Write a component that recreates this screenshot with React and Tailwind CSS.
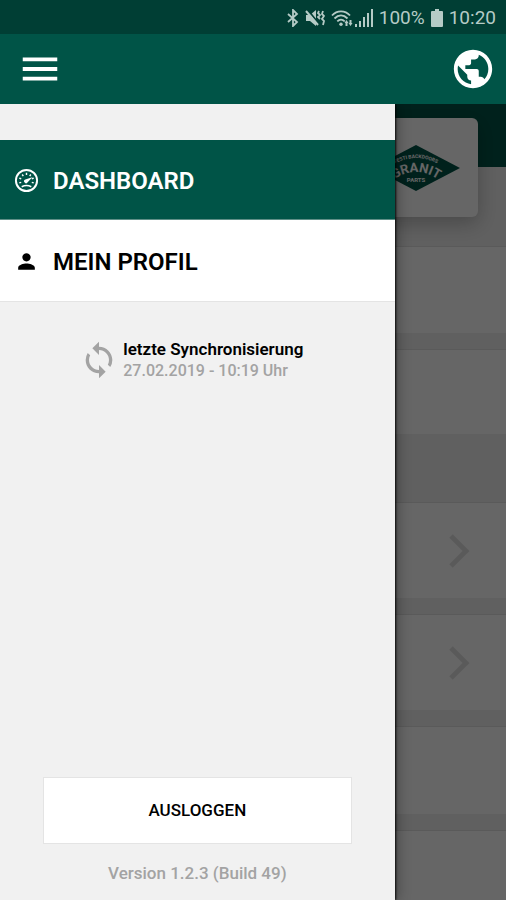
import React from 'react';
import { MdPublic, MdSync, MdPerson, MdMenu } from 'react-icons/md';

function GaugeIcon({ className }) {
  return (
    <svg viewBox="0 0 26 26" className={className} fill="none" stroke="currentColor" aria-hidden="true">
      <circle cx="13" cy="13" r="11" strokeWidth="2" />
      <path
        d="M5.500 15.500l2-.6M5.500 10.500l2 .7M8.500 6.800l1.200 1.600M13 5v2.200M17.500 6.800l-1.200 1.600M20.500 10.500l-2 .7M20.500 15.500l-2-.6"
        strokeWidth="1.500"
      />
      <path d="M8 19.500q5-2.600 10 0" strokeWidth="1.500" />
      <path d="M19 9.500l-5 5.600a2 2 0 1 1-2.200-3.200z" fill="currentColor" stroke="none" />
    </svg>
  );
}

const menuItems = [
  { label: 'DASHBOARD', icon: GaugeIcon, active: true },
  { label: 'MEIN PROFIL', icon: MdPerson, active: false },
];

function BluetoothIcon() {
  return (
    <svg viewBox="0 0 12 18" className="h-[18px] w-3" fill="none" stroke="currentColor" strokeWidth="1.8" aria-hidden="true">
      <path d="M1 5l9 8-4 4V1l4 4-9 8" />
    </svg>
  );
}

function MutedIcon() {
  return (
    <svg viewBox="0 0 20 18" className="h-[18px] w-5" fill="none" stroke="currentColor" aria-hidden="true">
      <path d="M1 6h4l6-5v16l-6-5H1z" fill="currentColor" stroke="none" />
      <path d="M2 0l12 15" stroke="#003e34" strokeWidth="2" />
      <path d="M1 2l12 14" strokeWidth="2" />
      <path d="M14 2l-1 2 2 2-2 2 2 2M18 2l-1 3 2 2-2 3 2 2-1 4" strokeWidth="1.8" />
    </svg>
  );
}

function WifiIcon() {
  return (
    <svg viewBox="0 0 22 18" className="h-[18px] w-[22px]" fill="none" stroke="currentColor" aria-hidden="true">
      <path d="M1 6.500C6 1 14 1 19 6.500" strokeWidth="1.800" />
      <path d="M3.500 9.500C7.500 5.500 12.500 5.500 16.500 9.500" strokeWidth="1.800" />
      <path d="M6.300 12.300c2.200-2.200 5.200-2.200 7.400 0" strokeWidth="1.800" />
      <circle cx="10" cy="15.300" r="1.700" fill="currentColor" stroke="none" />
      <path d="M15.500 11l2 3h-1v3h-2v-3h-1zM19.500 17l-2-3h1v-3h2v3h1z" fill="currentColor" stroke="none" />
    </svg>
  );
}

function SignalIcon() {
  return (
    <svg viewBox="0 0 18 18" className="size-[18px]" fill="currentColor" aria-hidden="true">
      <path d="M0 15h2v3H0zM4 12h2v6H4zM8 8h2v10H8zM12 4h2v14h-2zM16 0h2v18h-2z" />
    </svg>
  );
}

function BatteryIcon() {
  return (
    <svg viewBox="0 0 12 18" className="h-[18px] w-3" fill="currentColor" aria-hidden="true">
      <path d="M4 0h4v2h3a1 1 0 0 1 1 1v14a1 1 0 0 1-1 1H1a1 1 0 0 1-1-1V3a1 1 0 0 1 1-1h3z" />
    </svg>
  );
}

function StatusBar() {
  return (
    <div className="flex h-[34px] shrink-0 items-center justify-end gap-[6px] bg-[#003e34] pt-[2px] pr-[10px] text-[19px] text-[#b5cbc6]">
      <BluetoothIcon />
      <MutedIcon />
      <div className="flex items-center gap-[2px]">
        <WifiIcon />
        <SignalIcon />
      </div>
      <span>100%</span>
      <BatteryIcon />
      <span>10:20</span>
    </div>
  );
}

function Header() {
  return (
    <header className="flex h-[70px] shrink-0 items-center justify-between bg-[#005447] pr-[10px] pl-[17px] text-white">
      <button type="button" aria-label="Menü">
        <MdMenu className="size-[46px]" />
      </button>
      <button type="button" aria-label="Sprache">
        <MdPublic className="size-[46px]" />
      </button>
    </header>
  );
}

function Logo() {
  return (
    <svg viewBox="0 0 88 46" className="h-[46px] w-[88px]" role="img" aria-label="Granit Parts">
      <defs>
        <path id="logo-top" d="M14 24Q44 2 74 24" />
        <path id="logo-name" d="M17 38Q44 16 71 38" />
      </defs>
      <path d="M44 0L88 23L44 46L0 23Z" fill="#005447" />
      <g fill="#fff" fontFamily="Roboto, sans-serif" fontWeight="700" textAnchor="middle">
        <text fontSize="5">
          <textPath href="#logo-top" startOffset="50%">FESTI BACKDOORS</textPath>
        </text>
        <text fontSize="13">
          <textPath href="#logo-name" startOffset="50%">GRANIT</textPath>
        </text>
        <text x="44" y="37" fontSize="6">PARTS</text>
      </g>
    </svg>
  );
}

function Row({ arrow, className }) {
  return (
    <div className={`flex shrink-0 items-center justify-end border-t border-[#e2e2e2] bg-white pr-9 ${className}`}>
      {arrow && (
        <svg viewBox="0 0 21 34" className="h-[34px] w-[21px]" fill="none" stroke="#e2e2e2" strokeWidth="5" aria-hidden="true">
          <path d="M2 2l15 15L2 32" />
        </svg>
      )}
    </div>
  );
}

function Dashboard() {
  return (
    <div className="flex h-full flex-col overflow-hidden bg-[#f0f0f0]">
      <div className="h-[63px] shrink-0 bg-[#005447] px-7 pt-[14px]">
        <div className="relative ml-auto flex h-[99px] w-[124px] items-center justify-center rounded-md bg-white shadow-[0_6px_20px_rgba(0,0,0,0.25)]">
          <Logo />
        </div>
      </div>
      <Row className="mt-[79px] h-[87px]" />
      <Row className="mt-4 h-[85px]" />
      <Row arrow className="mt-[68px] h-24" />
      <Row arrow className="mt-4 h-24" />
      <Row className="mt-4 h-[88px]" />
      <Row className="mt-4 h-[88px]" />
    </div>
  );
}

function MenuItem({ item }) {
  const Icon = item.icon;
  return (
    <li>
      <a
        href="#"
        className={`flex items-center gap-[13px] border-b px-[13px] pt-[2px] text-2xl font-semibold ${
          item.active ? 'h-20 border-[#5f8f87] bg-[#005447] text-white' : 'h-[82px] border-[#e4e4e4] bg-white text-black'
        }`}
      >
        <Icon className="size-[27px] shrink-0 p-px" aria-hidden="true" />
        {item.label}
      </a>
    </li>
  );
}

function Drawer() {
  return (
    <aside className="absolute inset-y-0 left-0 flex w-[78%] flex-col bg-[#f1f1f1] pt-9 shadow-[1px_0_2px_rgba(0,0,0,0.9),3px_0_12px_rgba(0,0,0,0.3)]">
      <nav>
        <ul>
          {menuItems.map((item) => (
            <MenuItem key={item.label} item={item} />
          ))}
        </ul>
      </nav>

      <div className="mt-9 flex items-center justify-center gap-1 pr-3">
        <MdSync className="size-10 text-[#a3a3a3]" aria-hidden="true" />
        <div>
          <p className="text-[17px] leading-[22px] font-semibold text-black">letzte Synchronisierung</p>
          <p className="text-base leading-[22px] font-medium text-[#a3a3a3]">27.02.2019 - 10:19 Uhr</p>
        </div>
      </div>

      <div className="mt-auto px-[43px] pb-4 text-center">
        <button
          type="button"
          className="h-[67px] w-full border border-[#e4e4e4] bg-white text-[17px] font-medium text-black"
        >
          AUSLOGGEN
        </button>
        <p className="mt-[18px] text-[17px] leading-[22px] font-medium text-[#a3a3a3]">Version 1.2.3 (Build 49)</p>
      </div>
    </aside>
  );
}

export default function App() {
  return (
    <div className="flex h-screen flex-col overflow-hidden font-[Roboto,sans-serif]">
      <StatusBar />
      <Header />
      <main className="relative min-h-0 flex-1 overflow-hidden">
        <Dashboard />
        <div className="absolute inset-0 bg-black/60" />
        <Drawer />
      </main>
    </div>
  );
}
